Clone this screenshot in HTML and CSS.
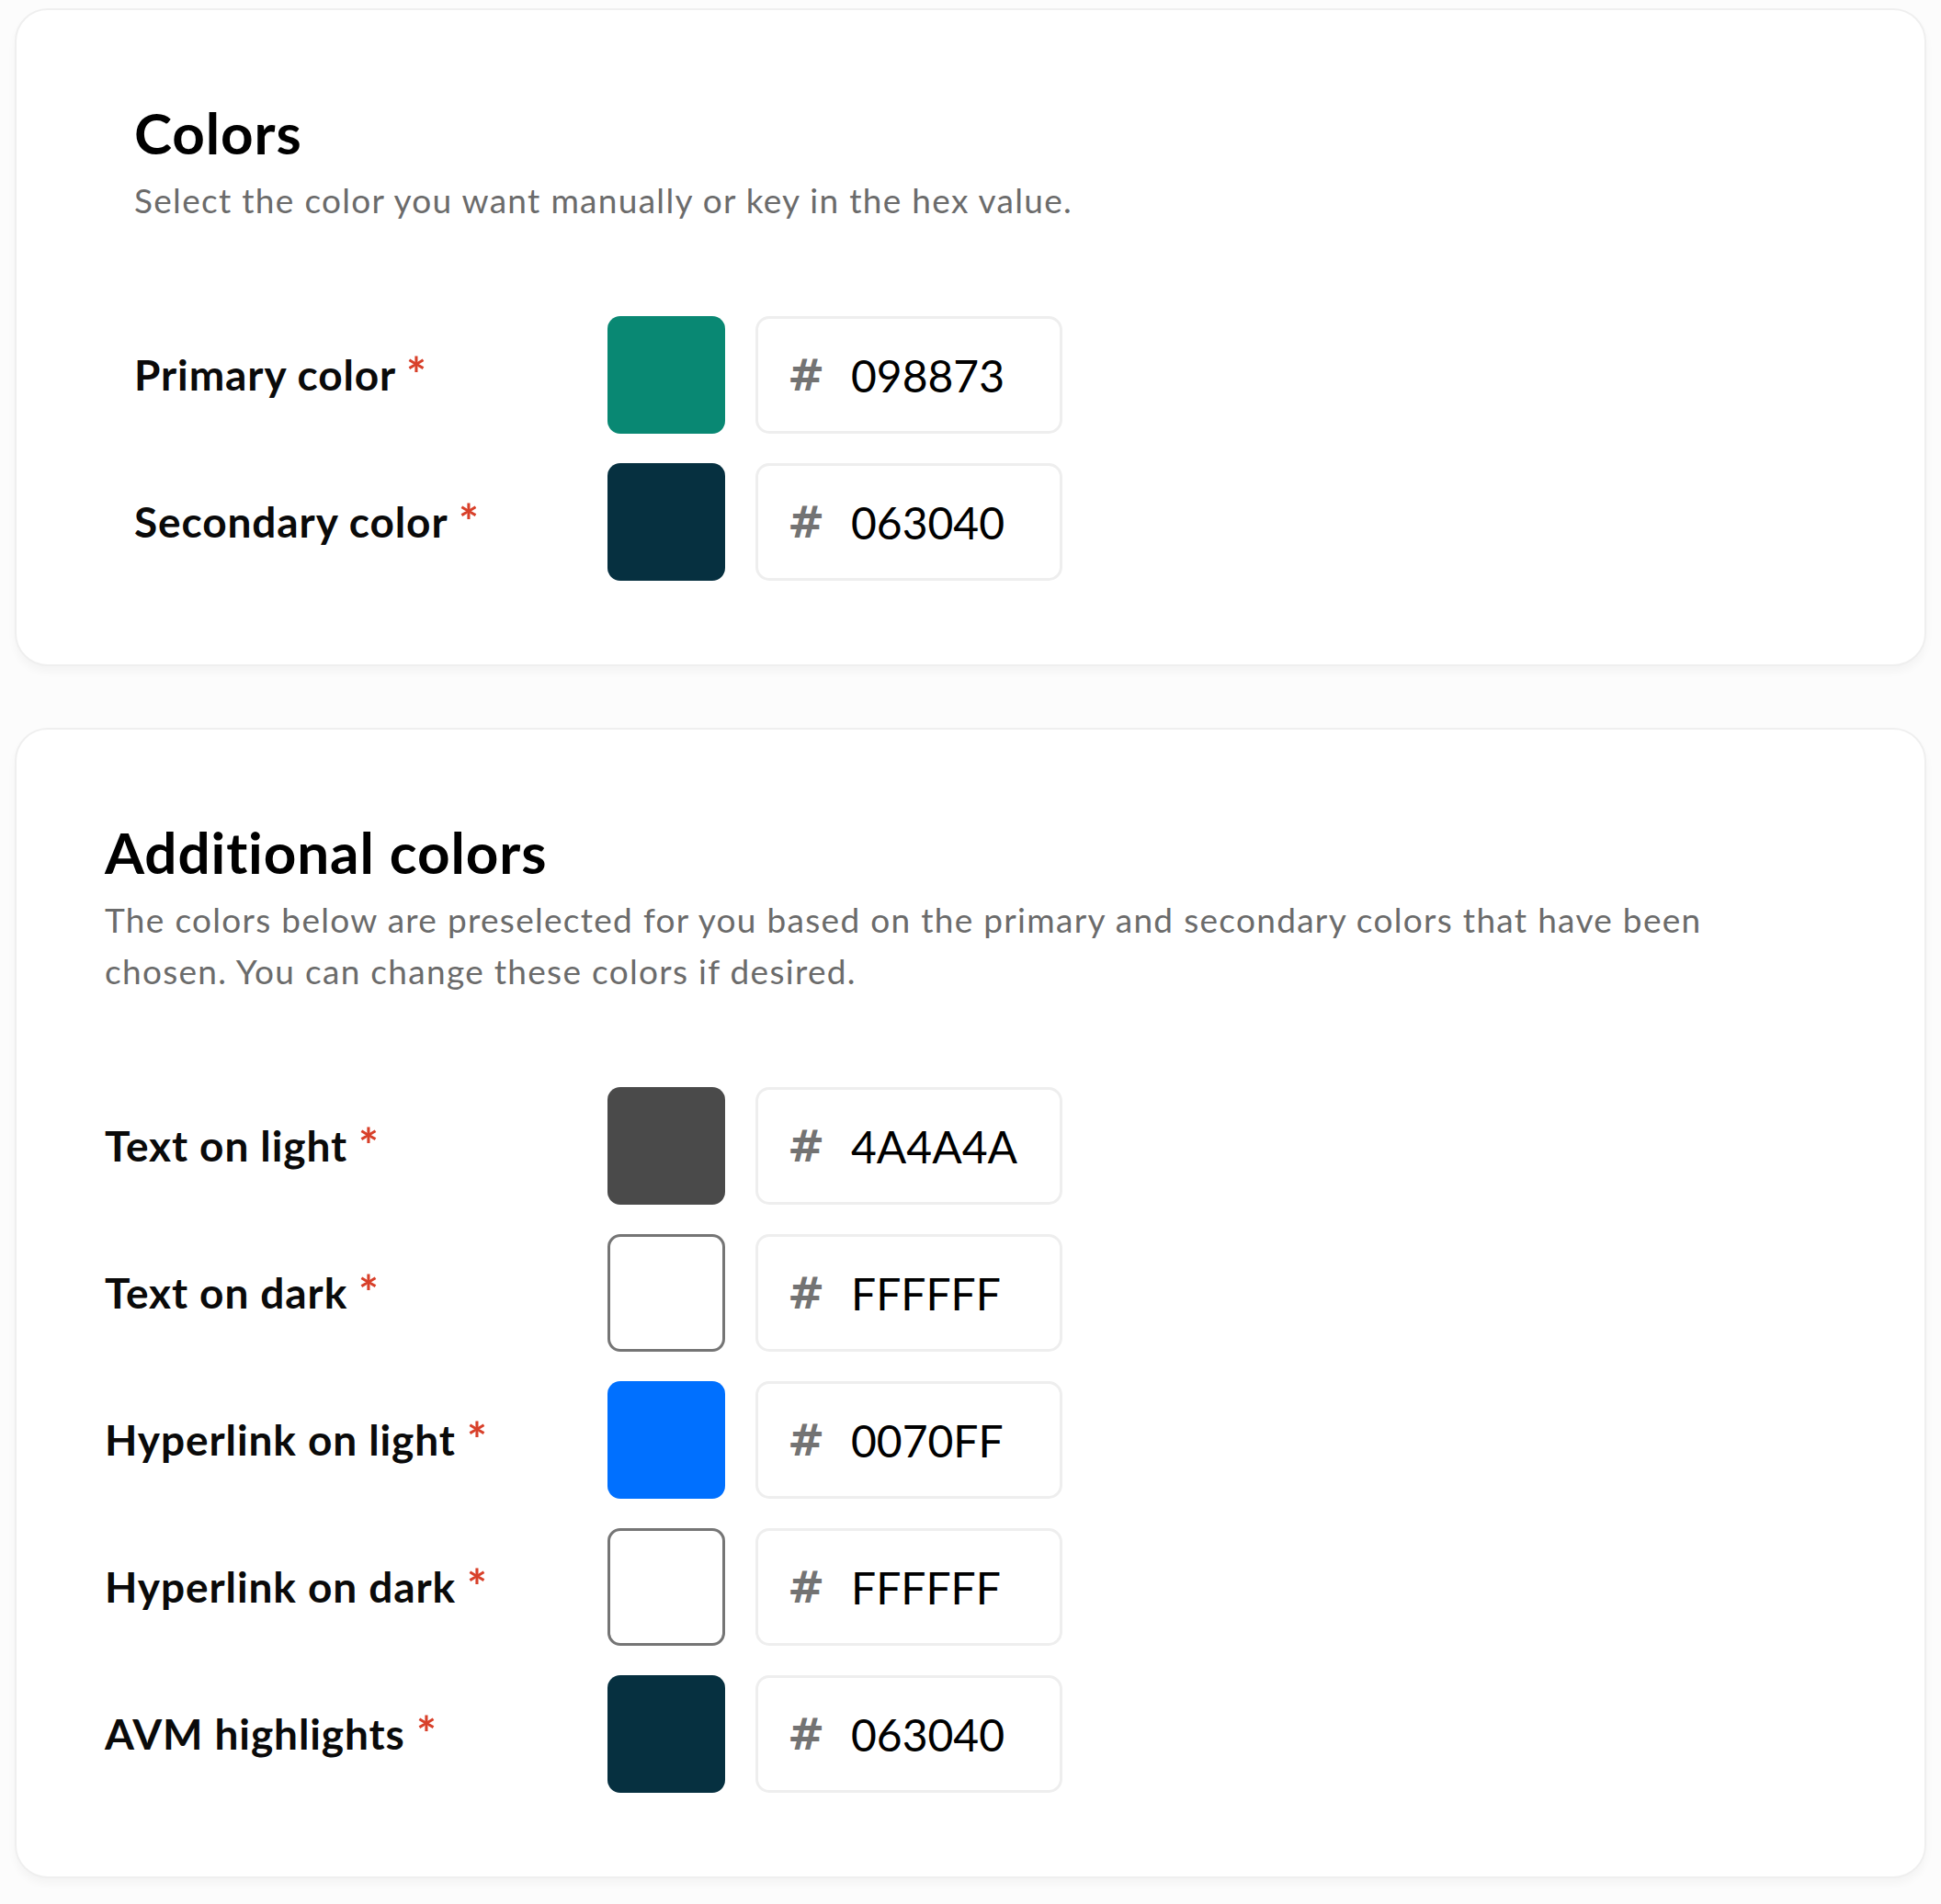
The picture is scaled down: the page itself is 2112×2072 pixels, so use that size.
FILE: index.html
```html
<!DOCTYPE html>
<html lang="en">
<head>
<meta charset="utf-8">
<title>Colors</title>
<link rel="stylesheet" href="styles.css">
</head>
<body>
<main class="page">
  <section class="card card--primary">
    <h2 class="card-title">Colors</h2>
    <p class="card-sub">Select the color you want manually or key in the hex value.</p>
    <div class="rows">
      <div class="row">
        <div class="label">Primary color <span class="req">*</span></div>
        <div class="swatch swatch--098873"></div>
        <div class="hex"><span class="hash">#</span><span class="val">098873</span></div>
      </div>
      <div class="row">
        <div class="label">Secondary color <span class="req">*</span></div>
        <div class="swatch swatch--063040"></div>
        <div class="hex"><span class="hash">#</span><span class="val">063040</span></div>
      </div>
    </div>
  </section>

  <section class="card card--additional">
    <h2 class="card-title">Additional colors</h2>
    <p class="card-sub">The colors below are preselected for you based on the primary and secondary colors that have been chosen. You can change these colors if desired.</p>
    <div class="rows">
      <div class="row">
        <div class="label">Text on light <span class="req">*</span></div>
        <div class="swatch swatch--4a4a4a"></div>
        <div class="hex"><span class="hash">#</span><span class="val">4A4A4A</span></div>
      </div>
      <div class="row">
        <div class="label">Text on dark <span class="req">*</span></div>
        <div class="swatch swatch--white"></div>
        <div class="hex"><span class="hash">#</span><span class="val">FFFFFF</span></div>
      </div>
      <div class="row">
        <div class="label">Hyperlink on light <span class="req">*</span></div>
        <div class="swatch swatch--0070ff"></div>
        <div class="hex"><span class="hash">#</span><span class="val">0070FF</span></div>
      </div>
      <div class="row">
        <div class="label">Hyperlink on dark <span class="req">*</span></div>
        <div class="swatch swatch--white"></div>
        <div class="hex"><span class="hash">#</span><span class="val">FFFFFF</span></div>
      </div>
      <div class="row">
        <div class="label">AVM highlights <span class="req">*</span></div>
        <div class="swatch swatch--063040"></div>
        <div class="hex"><span class="hash">#</span><span class="val">063040</span></div>
      </div>
    </div>
  </section>
</main>
</body>
</html>
```

FILE: styles.css
```css
* { box-sizing: border-box; }

html, body {
  margin: 0;
  padding: 0;
  background: #fcfcfc;
}

body {
  font-family: "Lato", "Noto Sans", sans-serif;
  color: #000;
}

.page {
  display: flex;
  flex-direction: column;
  gap: 67px;
  padding: 9px 16px 20px 16px;
}

.card {
  background: #fff;
  border: 2px solid #efefef;
  border-radius: 36px;
  box-shadow: 0 6px 10px rgba(0, 0, 0, 0.035);
  padding: 96px 96px 91px 96px;
}

.card--primary {
  padding-left: 128px;
}

.card-title {
  margin: 0;
  font-size: 62px;
  line-height: 74px;
  font-weight: 700;
  letter-spacing: 0.9px;
  color: #000;
}

.card-sub {
  margin: 9px 0 0 0;
  font-size: 37px;
  line-height: 56px;
  letter-spacing: 1.3px;
  color: #6b6b6b;
  max-width: 1800px;
}

.rows {
  margin-top: 98px;
  display: flex;
  flex-direction: column;
  gap: 32px;
}

.row {
  display: flex;
  align-items: center;
  height: 128px;
}

.label {
  font-size: 46px;
  line-height: 56px;
  font-weight: 700;
  letter-spacing: 0.9px;
  color: #0a0a0a;
  width: 547px;
  flex: none;
}

.card--primary .label {
  width: 515px;
}

.req {
  display: inline-block;
  color: #d8402a;
  font-weight: 700;
  letter-spacing: 0;
  transform: scale(1.12);
  transform-origin: left center;
}

.swatch {
  width: 128px;
  height: 128px;
  border-radius: 14px;
  flex: none;
}

.swatch--098873 { background: #098873; }
.swatch--063040 { background: #063040; }
.swatch--4a4a4a { background: #4a4a4a; }
.swatch--0070ff { background: #0070ff; }
.swatch--white {
  background: #fff;
  border: 3px solid #757575;
}

.hex {
  margin-left: 33px;
  width: 334px;
  height: 128px;
  border: 3px solid #eeeeee;
  border-radius: 15px;
  display: flex;
  align-items: center;
  padding-left: 32px;
  font-size: 48px;
}

.hash {
  font-family: "DejaVu Sans", sans-serif;
  color: #737373;
  font-weight: 700;
  font-size: 48px;
  width: 69px;
  flex: none;
}

.val {
  color: #000;
  font-weight: 400;
}
```
